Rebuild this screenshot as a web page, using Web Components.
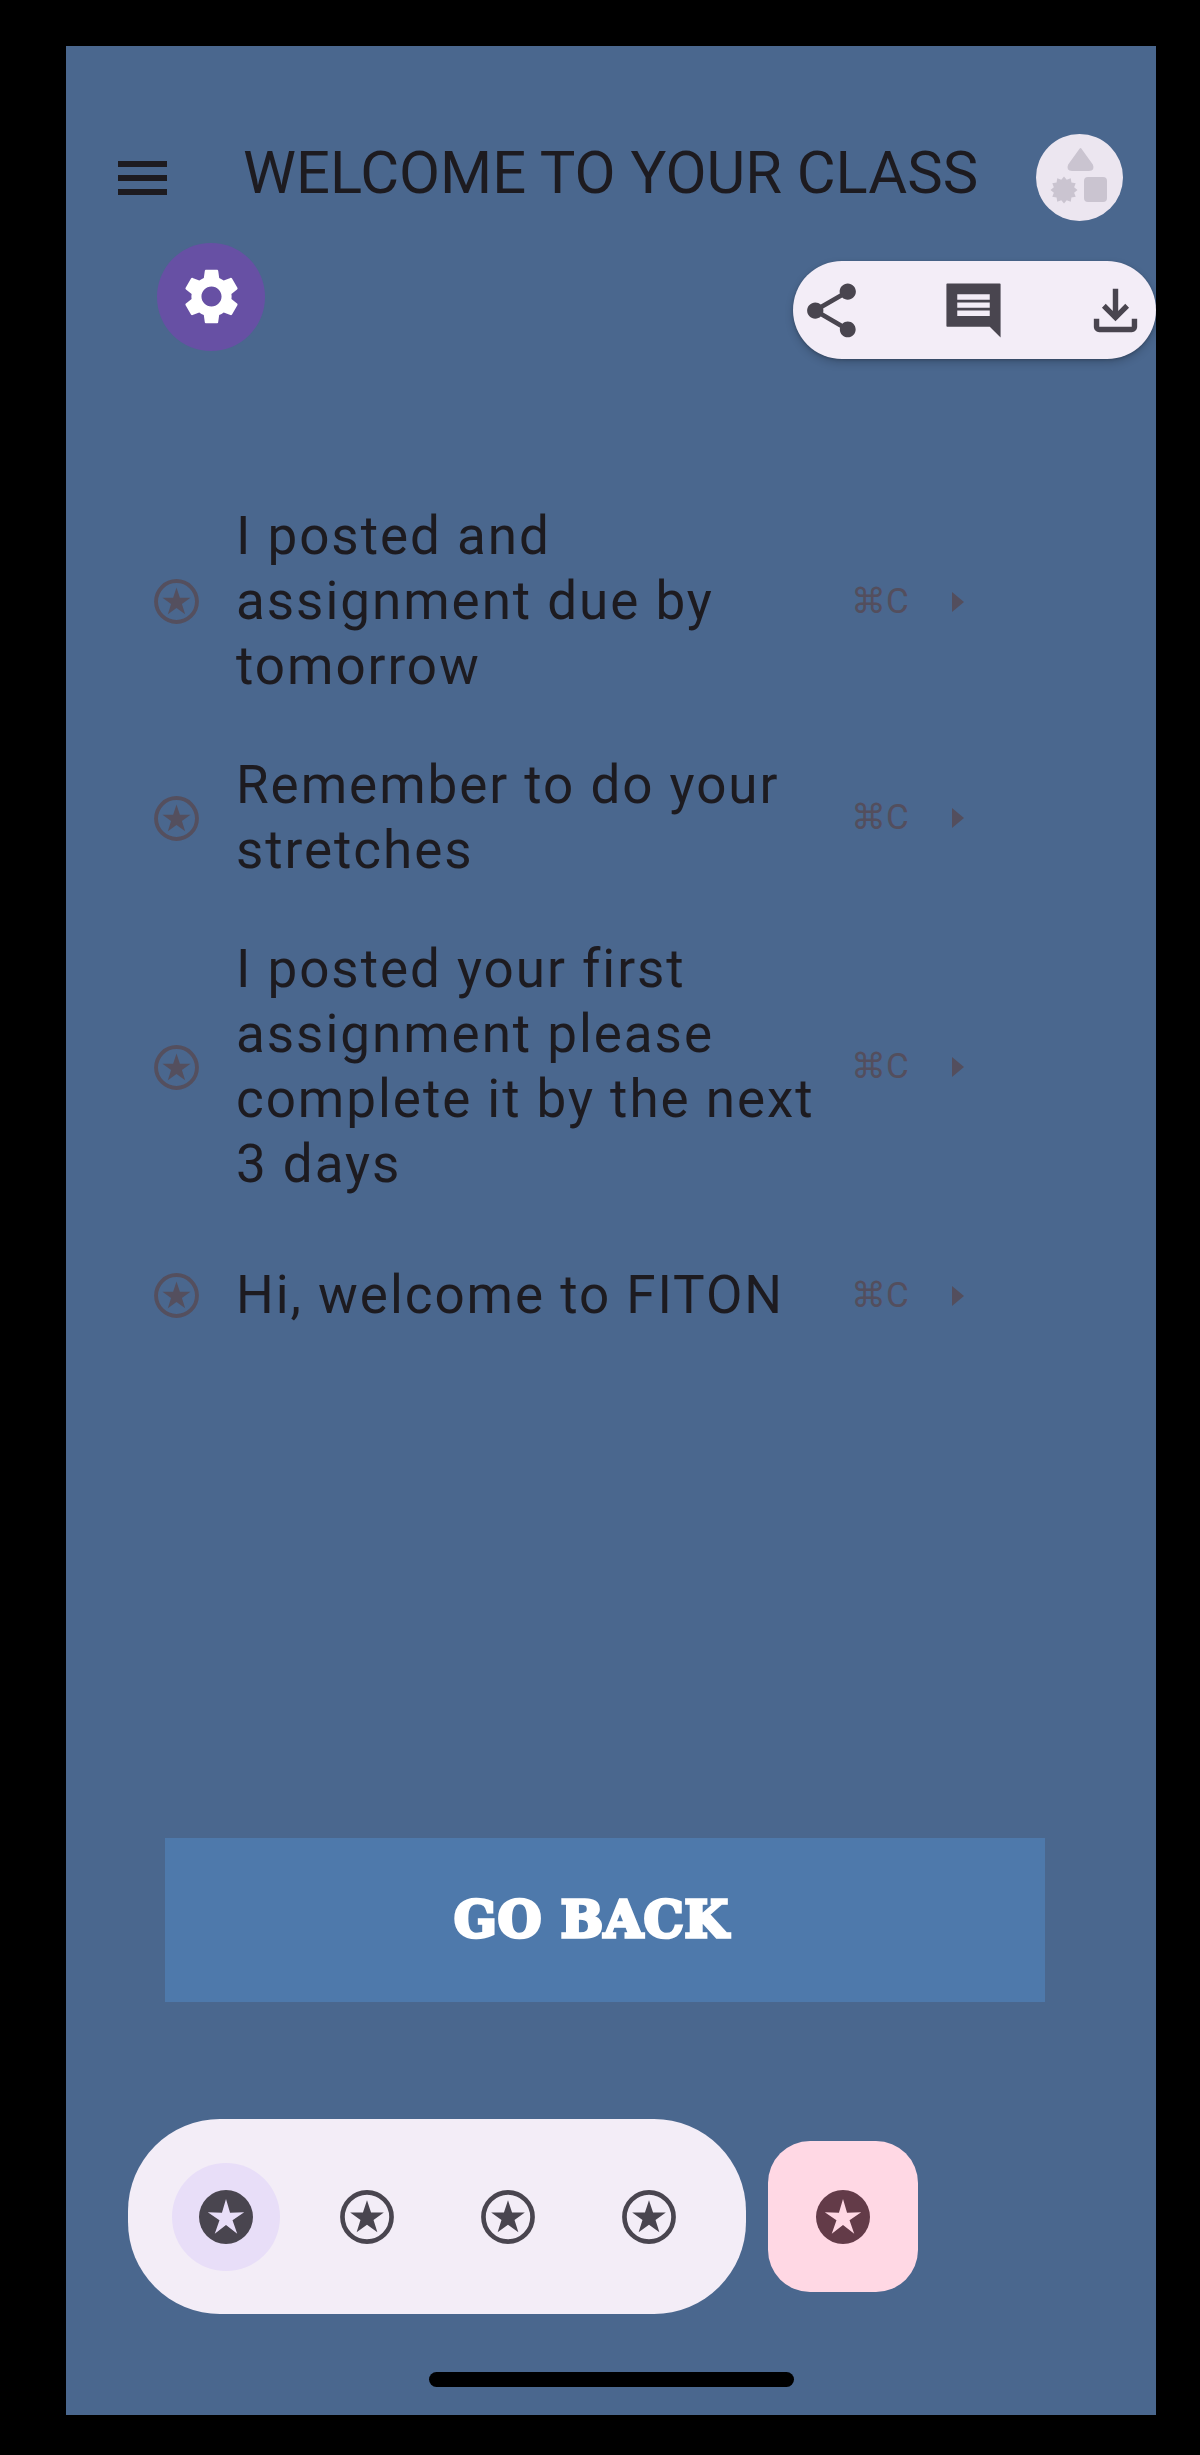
<!DOCTYPE html>
<html>
<head>
<meta charset="utf-8">
<title>Welcome to your class</title>
<style>
  html, body { margin: 0; background: #000; }
  body { font-family: Roboto, "Liberation Sans", sans-serif; overflow: hidden; }
</style>
</head>
<body>
<class-screen>
  <top-bar title="WELCOME TO YOUR CLASS"></top-bar>
  <action-row></action-row>
  <message-list>
    <message-item>I posted and assignment due by tomorrow</message-item>
    <message-item>Remember to do your stretches</message-item>
    <message-item>I posted your first assignment please complete it by the next 3 days</message-item>
    <message-item last>Hi, welcome to FITON</message-item>
  </message-list>
  <go-back-button>GO BACK</go-back-button>
  <bottom-dock></bottom-dock>
  <home-bar></home-bar>
</class-screen>

<script>
function starPoints(cx, cy, R, r) {
  const pts = [];
  for (let i = 0; i < 10; i++) {
    const a = (-90 + i * 36) * Math.PI / 180;
    const d = i % 2 ? r : R;
    pts.push((cx + d * Math.cos(a)).toFixed(2) + "," + (cy + d * Math.sin(a)).toFixed(2));
  }
  return pts.join(" ");
}

function burstPoints(cx, cy, R, r, n) {
  const pts = [];
  for (let i = 0; i < n * 2; i++) {
    const a = i * Math.PI / n;
    const d = i % 2 ? r : R;
    pts.push((cx + d * Math.cos(a)).toFixed(2) + "," + (cy + d * Math.sin(a)).toFixed(2));
  }
  return pts.join(" ");
}

class StarIcon extends HTMLElement {
  connectedCallback() {
    const size = this.getAttribute("size") || 54;
    const color = this.getAttribute("color") || "#49454f";
    const cut = this.getAttribute("cut");
    const inside = cut
      ? `<circle cx="11" cy="11" r="11" fill="${color}"/>
         <polygon points="${starPoints(11, 11.5, 7.8, 2.8)}" fill="${cut}"/>`
      : `<circle cx="11" cy="11" r="10" fill="none" stroke="${color}" stroke-width="1.9"/>
         <polygon points="${starPoints(11, 11.4, 7.2, 2.8)}" fill="${color}"/>`;
    this.attachShadow({ mode: "open" }).innerHTML = `
      <style>
        :host { display: block; width: ${size}px; height: ${size}px; flex: none; }
        svg { display: block; width: 100%; height: 100%; }
      </style>
      <svg viewBox="0 0 22 22">${inside}</svg>`;
  }
}

class ClassScreen extends HTMLElement {
  constructor() {
    super();
    this.attachShadow({ mode: "open" }).innerHTML = `
      <style>
        :host {
          display: flex;
          flex-direction: column;
          box-sizing: border-box;
          width: 1090px;
          height: 2369px;
          margin: 46px 0 0 66px;
          padding-top: 88px;
          background: #4a678e;
          overflow: hidden;
        }
      </style>
      <slot></slot>`;
  }
}

class TopBar extends HTMLElement {
  connectedCallback() {
    this.attachShadow({ mode: "open" }).innerHTML = `
      <style>
        :host {
          display: flex;
          align-items: center;
          height: 87px;
          padding: 0 33px 0 52px;
          color: #1d1b20;
        }
        .menu { display: flex; flex-direction: column; gap: 8px; width: 49px; flex: none; }
        .menu i { display: block; height: 6px; background: #1d1b20; }
        .title {
          flex: 1;
          margin: 0 0 8px 76px;
          font: 400 59.7px/67px Roboto, sans-serif;
          white-space: nowrap;
        }
        svg { display: block; width: 87px; height: 87px; flex: none; }
      </style>
      <div class="menu"><i></i><i></i><i></i></div>
      <div class="title">${this.getAttribute("title")}</div>
      <svg viewBox="0 0 87 87">
        <circle cx="43.5" cy="43.5" r="43.5" fill="#ece6f0"/>
        <path d="M44.5 15 L56 31 Q58 36 53 36 H36 Q31 36 33 31 Z" fill="#cac4d0" stroke="#cac4d0" stroke-width="2" stroke-linejoin="round"/>
        <polygon points="${burstPoints(28, 56, 13.5, 10.5, 12)}" fill="#cac4d0"/>
        <rect x="48" y="43" width="23" height="25" rx="4" fill="#cac4d0"/>
      </svg>`;
  }
}

class ActionRow extends HTMLElement {
  constructor() {
    super();
    this.attachShadow({ mode: "open" }).innerHTML = `
      <style>
        :host {
          display: flex;
          align-items: flex-start;
          justify-content: space-between;
          margin-top: 22px;
          padding-left: 91px;
        }
        .gear {
          display: flex;
          align-items: center;
          justify-content: center;
          width: 108px;
          height: 108px;
          border-radius: 50%;
          background: #6750a4;
        }
        .gear svg { width: 67px; height: 67px; margin-top: -1px; fill: #fff; }
        .pill {
          display: flex;
          align-items: center;
          justify-content: space-between;
          box-sizing: border-box;
          width: 363px;
          height: 98px;
          margin-top: 18px;
          padding: 0 8px 0 6px;
          border-radius: 49px;
          background: #f3edf7;
          box-shadow: 0 4px 8px rgba(0,0,0,.18), 0 1px 3px rgba(0,0,0,.2);
        }
        .pill svg { width: 65px; height: 65px; fill: #49454f; flex: none; }
      </style>
      <div class="gear">
        <svg viewBox="0 0 24 24"><path d="M19.14 12.94c.04-.3.06-.61.06-.94 0-.32-.02-.64-.07-.94l2.03-1.58c.18-.14.23-.41.12-.61l-1.92-3.32c-.12-.22-.37-.29-.59-.22l-2.39.96c-.5-.38-1.03-.7-1.62-.94l-.36-2.54c-.04-.24-.24-.41-.48-.41h-3.84c-.24 0-.43.17-.47.41l-.36 2.54c-.59.24-1.13.57-1.62.94l-2.39-.96c-.22-.08-.47 0-.59.22L2.74 8.87c-.12.21-.08.47.12.61l2.03 1.58c-.05.3-.09.63-.09.94s.02.64.07.94l-2.03 1.58c-.18.14-.23.41-.12.61l1.92 3.32c.12.22.37.29.59.22l2.39-.96c.5.38 1.03.7 1.62.94l.36 2.54c.05.24.24.41.48.41h3.84c.24 0 .44-.17.47-.41l.36-2.54c.59-.24 1.13-.56 1.62-.94l2.39.96c.22.08.47 0 .59-.22l1.92-3.32c.12-.22.07-.47-.12-.61l-2.01-1.58zM12 15.6c-1.98 0-3.6-1.62-3.6-3.6s1.62-3.6 3.6-3.6 3.6 1.62 3.6 3.6-1.62 3.6-3.6 3.6z"/></svg>
      </div>
      <div class="pill">
        <svg viewBox="0 0 24 24"><path d="M18 16.08c-.76 0-1.44.3-1.96.77L8.91 12.7c.05-.23.09-.46.09-.7s-.04-.47-.09-.7l7.05-4.11c.54.5 1.25.81 2.04.81 1.66 0 3-1.34 3-3s-1.34-3-3-3-3 1.34-3 3c0 .24.04.47.09.7L8.04 9.81C7.5 9.31 6.79 9 6 9c-1.66 0-3 1.34-3 3s1.34 3 3 3c.79 0 1.5-.31 2.04-.81l7.12 4.16c-.05.21-.08.43-.08.65 0 1.61 1.31 2.92 2.92 2.92s2.92-1.31 2.92-2.92-1.31-2.92-2.92-2.92z"/></svg>
        <svg viewBox="0 0 24 24"><path d="M22 2.3c0-.2-.1-.3-.3-.3H2.3c-.2 0-.3.1-.3.3v15.4c0 .2.1.3.3.3H18l4 4V2.3zM18 14H6v-2h12v2zm0-3H6V9h12v2zm0-3H6V6h12v2z"/></svg>
        <svg viewBox="0 0 24 24"><path d="M12 16l-5-5 1.4-1.45 2.6 2.6V4h2v8.15l2.6-2.6L17 11l-5 5zM6 20c-.55 0-1.02-.2-1.41-.59C4.2 19.02 4 18.55 4 18v-3h2v3h12v-3h2v3c0 .55-.2 1.02-.59 1.41-.39.39-.86.59-1.41.59H6z"/></svg>
      </div>`;
  }
}

class MessageList extends HTMLElement {
  constructor() {
    super();
    this.attachShadow({ mode: "open" }).innerHTML = `
      <style>
        :host { display: flex; flex-direction: column; margin-top: 118px; padding-left: 88px; }
      </style>
      <slot></slot>`;
  }
}

class MessageItem extends HTMLElement {
  constructor() {
    super();
    this.attachShadow({ mode: "open" }).innerHTML = `
      <style>
        :host {
          display: flex;
          align-items: center;
          box-sizing: border-box;
          padding: 27px 0;
        }
        :host([last]) { min-height: 141px; padding-bottom: 25px; }
        .text {
          width: 590px;
          margin-left: 37px;
          flex: none;
          font: 400 53px/65px Roboto, sans-serif;
          letter-spacing: 1.95px;
          color: #1d1b20;
        }
        .key {
          margin-left: 25px;
          width: 56px;
          font: 400 35px/40px Roboto, "DejaVu Sans", sans-serif;
          color: #534e5d;
          white-space: nowrap;
        }
        .arrow {
          margin-left: 45px;
          width: 0;
          height: 0;
          border-left: 12px solid #534e5d;
          border-top: 10px solid transparent;
          border-bottom: 10px solid transparent;
        }
      </style>
      <star-icon size="45" color="#544f5e"></star-icon>
      <div class="text"><slot></slot></div>
      <div class="key">⌘C</div>
      <div class="arrow"></div>`;
  }
}

class GoBackButton extends HTMLElement {
  constructor() {
    super();
    this.attachShadow({ mode: "open" }).innerHTML = `
      <style>
        :host {
          display: flex;
          align-items: center;
          justify-content: center;
          box-sizing: border-box;
          width: 880px;
          height: 164px;
          margin: 473px 0 0 99px;
          padding-right: 27px;
          background: #4e79ab;
          color: #fff;
          font: 700 50px/1 "DejaVu Serif", serif;
          -webkit-text-stroke: 3.5px #fff;
          letter-spacing: 1px;
        }
      </style>
      <slot></slot>`;
  }
}

class BottomDock extends HTMLElement {
  constructor() {
    super();
    this.attachShadow({ mode: "open" }).innerHTML = `
      <style>
        :host {
          display: flex;
          align-items: center;
          gap: 22px;
          margin: 117px 0 0 61.5px;
        }
        .nav {
          display: grid;
          grid-template-columns: repeat(4, 141px);
          align-items: center;
          box-sizing: border-box;
          width: 618.5px;
          height: 195px;
          padding-left: 28px;
          border-radius: 92px;
          background: #f3edf7;
        }
        .slot { display: flex; align-items: center; justify-content: center; }
        .active {
          display: flex;
          align-items: center;
          justify-content: center;
          width: 108px;
          height: 108px;
          border-radius: 50%;
          background: #e8def8;
        }
        .fab {
          display: flex;
          align-items: center;
          justify-content: center;
          width: 150px;
          height: 151px;
          border-radius: 42px;
          background: #ffd8e4;
        }
      </style>
      <div class="nav">
        <div class="slot"><div class="active"><star-icon cut="#e8def8" color="#49454f"></star-icon></div></div>
        <div class="slot"><star-icon></star-icon></div>
        <div class="slot"><star-icon></star-icon></div>
        <div class="slot"><star-icon></star-icon></div>
      </div>
      <div class="fab"><star-icon cut="#ffd8e4" color="#633b48"></star-icon></div>`;
  }
}

class HomeBar extends HTMLElement {
  constructor() {
    super();
    this.attachShadow({ mode: "open" }).innerHTML = `
      <style>
        :host {
          display: block;
          width: 365px;
          height: 15px;
          margin: 58px 0 0 363px;
          border-radius: 8px;
          background: #000;
        }
      </style>`;
  }
}

customElements.define("star-icon", StarIcon);
customElements.define("class-screen", ClassScreen);
customElements.define("top-bar", TopBar);
customElements.define("action-row", ActionRow);
customElements.define("message-list", MessageList);
customElements.define("message-item", MessageItem);
customElements.define("go-back-button", GoBackButton);
customElements.define("bottom-dock", BottomDock);
customElements.define("home-bar", HomeBar);
</script>
</body>
</html>
